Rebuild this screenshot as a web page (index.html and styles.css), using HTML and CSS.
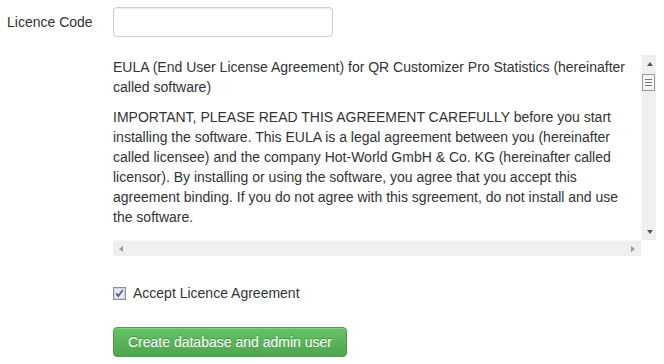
FILE: index.html
```html
<!DOCTYPE html>
<html lang="en">

<head>
    <meta charset="UTF-8">
    <title>Install</title>
    <link rel="stylesheet" href="styles.css">
</head>

<body>
    <form class="install-form">
        <div class="field-row">
            <label class="field-label" for="licence">Licence Code</label>
            <input class="field-input" type="text" id="licence">
        </div>

        <div class="eula-row">
            <div class="eula">
                <div class="eula-text">
                    <p>EULA (End User License Agreement) for QR Customizer Pro Statistics (hereinafter called software)</p>
                    <p>IMPORTANT, PLEASE READ THIS AGREEMENT CAREFULLY before you start installing the software. This EULA is a legal agreement between you (hereinafter called licensee) and the company Hot-World GmbH &amp; Co. KG (hereinafter called licensor). By installing or using the software, you agree that you accept this agreement binding. If you do not agree with this sgreement, do not install and use the software.</p>
                </div>
                <div class="vbar">
                    <span class="sb-btn"><i class="arrow arrow-up"></i></span>
                    <span class="thumb"><i></i><i></i><i></i></span>
                    <span class="sb-fill"></span>
                    <span class="sb-btn"><i class="arrow arrow-down"></i></span>
                </div>
                <div class="hbar">
                    <span class="sb-btn"><i class="arrow arrow-left"></i></span>
                    <span class="sb-fill"></span>
                    <span class="sb-btn"><i class="arrow arrow-right"></i></span>
                </div>
                <div class="corner"></div>
            </div>

            <label class="check-row">
                <svg class="check-box" width="13" height="13" viewBox="0 0 13 13">
                    <rect x="0.5" y="0.5" width="12" height="12" fill="#f4f4f4" stroke="#8e8f8f"/>
                    <rect x="1.5" y="1.5" width="10" height="10" fill="#e6e9ef" stroke="#d2d5da"/>
                    <path d="M3.2 6.4 L5.3 9 L9.8 3" fill="none" stroke="#4a5f97" stroke-width="1.8"/>
                </svg>
                Accept Licence Agreement
            </label>

            <button class="btn-success" type="button">Create database and admin user</button>
        </div>
    </form>
</body>

</html>
```

FILE: styles.css
```css
* {
    box-sizing: border-box;
}

body {
    margin: 0;
    padding: 7px 0 0 7px;
    font-family: "Liberation Sans", Arial, sans-serif;
    font-size: 14px;
    line-height: 20px;
    color: #333;
    background: #fff;
}

.field-row {
    display: flex;
    align-items: center;
}

.field-label {
    width: 106px;
}

.field-input {
    width: 220px;
    height: 30px;
    border: 1px solid #ccc;
    border-radius: 4px;
    box-shadow: inset 0 1px 1px rgba(0, 0, 0, 0.075);
    font: inherit;
}

.eula-row {
    margin: 18px 0 0 106px;
}

.eula {
    display: grid;
    grid-template-columns: 528px 15px;
    grid-template-rows: 185px 16px;
}

.eula-text {
    overflow: hidden;
    padding-top: 2px;
}

.eula-text p {
    margin: 0 0 10px;
}

/* fake classic scrollbars */
.vbar,
.hbar {
    display: flex;
    background: #efefef;
}

.vbar {
    flex-direction: column;
    border-left: 1px solid #f7f7f7;
}

.hbar {
    border-top: 1px solid #f7f7f7;
}

.sb-btn {
    display: flex;
    align-items: center;
    justify-content: center;
    width: 15px;
    height: 17px;
}

.hbar .sb-btn {
    width: 16px;
    height: auto;
}

.sb-fill {
    flex-grow: 1;
}

.arrow {
    width: 0;
    height: 0;
    border: 3px solid transparent;
}

.arrow-up {
    border-bottom: 4px solid #555;
    border-top: 0;
}

.arrow-down {
    border-top: 4px solid #555;
    border-bottom: 0;
}

.arrow-left {
    border-right: 4px solid #999;
    border-left: 0;
}

.arrow-right {
    border-left: 4px solid #999;
    border-right: 0;
}

.thumb {
    display: flex;
    flex-direction: column;
    justify-content: center;
    align-items: center;
    gap: 2px;
    height: 17px;
    margin: 2px 1px 0 0;
    border: 1px solid #9a9a9a;
    background: #f6f6f6;
}

.thumb i {
    display: block;
    width: 7px;
    height: 1px;
    background: #777;
}

.corner {
    background: #fff;
}

.check-row {
    display: flex;
    align-items: center;
    gap: 7px;
    margin-top: 27px;
}

.btn-success {
    display: block;
    height: 30px;
    margin-top: 24px;
    padding: 0 14px;
    font: inherit;
    color: #fff;
    text-shadow: 0 -1px 0 rgba(0, 0, 0, 0.25);
    background: linear-gradient(to bottom, #64c564, #51a351);
    border: 1px solid #4a9a4a;
    border-radius: 4px;
    box-shadow: inset 0 1px 0 rgba(255, 255, 255, 0.2), 0 1px 2px rgba(0, 0, 0, 0.05);
}
```
